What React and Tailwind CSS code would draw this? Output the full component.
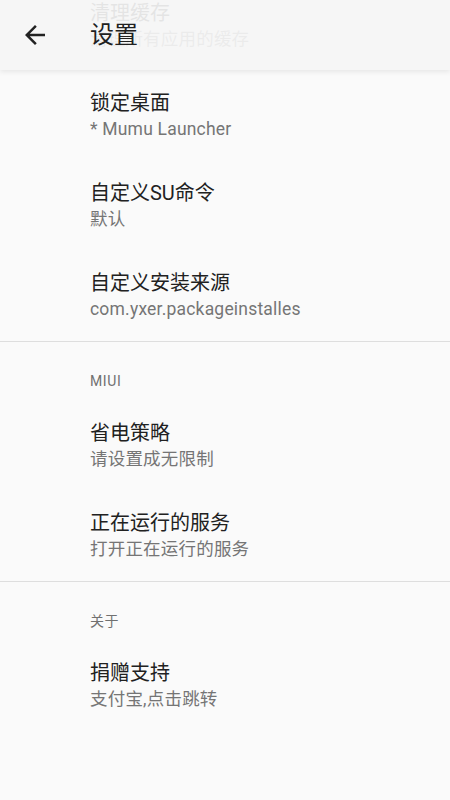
import React from "react";

const font = { fontFamily: "Roboto, 'Noto Sans CJK SC', sans-serif" };

function Item({ title, sub }) {
  return (
    <div className="h-[90px] flex flex-col justify-center pl-[90px] pr-4">
      <div className="text-[20px] leading-[26px] text-[#212121]">{title}</div>
      <div className="text-[17.5px] leading-[26px] tracking-[0.2px] text-[#757575]">{sub}</div>
    </div>
  );
}

function Category({ label }) {
  return (
    <div className="h-[59px] pl-[90px] pt-[29px]">
      <div className="text-[14px] leading-[20px] text-[#707070] tracking-[0.6px]">{label}</div>
    </div>
  );
}

export default function App() {
  return (
    <div className="relative w-[450px] h-[800px] overflow-hidden bg-[#fafafa]" style={font}>
      <div className="-mt-[19px]">
        <Item title="清理缓存" sub="清理所有应用的缓存" />
        <Item title="锁定桌面" sub="* Mumu Launcher" />
        <Item title="自定义SU命令" sub="默认" />
        <Item title="自定义安装来源" sub="com.yxer.packageinstalles" />
        <div className="h-px bg-[#dedede]" />
        <Category label="MIUI" />
        <Item title="省电策略" sub="请设置成无限制" />
        <Item title="正在运行的服务" sub="打开正在运行的服务" />
        <div className="h-px bg-[#dedede]" />
        <Category label="关于" />
        <Item title="捐赠支持" sub="支付宝,点击跳转" />
      </div>
      <div className="absolute top-0 left-0 right-0 h-[70px] bg-[#f5f5f5]/[0.92] shadow-[0_2px_5px_rgba(0,0,0,0.08)] flex items-center">
        <div className="w-[90px] flex items-center pl-[20px]">
          <svg width="30" height="30" viewBox="0 0 24 24" fill="#222">
            <path d="M20 11H7.83l5.59-5.59L12 4l-8 8 8 8 1.41-1.41L7.83 13H20v-2z" />
          </svg>
        </div>
        <div className="text-[24px] leading-[30px] text-[#212121]">设置</div>
      </div>
    </div>
  );
}
